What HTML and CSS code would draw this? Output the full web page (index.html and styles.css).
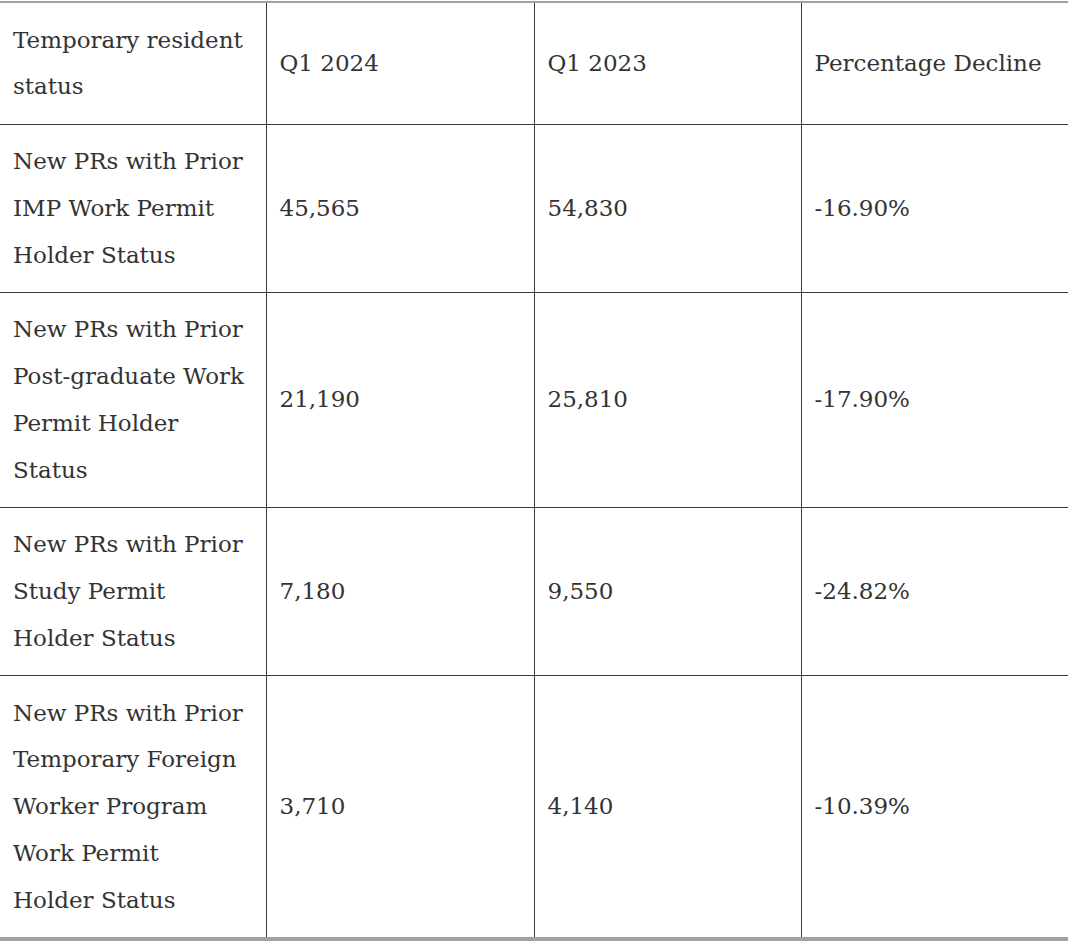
FILE: index.html
```html
<!DOCTYPE html>
<html lang="en">
<head>
<meta charset="utf-8">
<title>Temporary resident status</title>
<link rel="stylesheet" href="styles.css">
</head>
<body>
<table class="data">
  <colgroup>
    <col class="c1"><col class="c2"><col class="c3"><col class="c4">
  </colgroup>
  <tbody>
    <tr class="r-head">
      <td>Temporary resident<br>status</td>
      <td>Q1 2024</td>
      <td>Q1 2023</td>
      <td>Percentage Decline</td>
    </tr>
    <tr class="r1">
      <td>New PRs with Prior<br>IMP Work Permit<br>Holder Status</td>
      <td>45,565</td>
      <td>54,830</td>
      <td>-16.90%</td>
    </tr>
    <tr class="r2">
      <td>New PRs with Prior<br>Post-graduate Work<br>Permit Holder<br>Status</td>
      <td>21,190</td>
      <td>25,810</td>
      <td>-17.90%</td>
    </tr>
    <tr class="r3">
      <td>New PRs with Prior<br>Study Permit<br>Holder Status</td>
      <td>7,180</td>
      <td>9,550</td>
      <td>-24.82%</td>
    </tr>
    <tr class="r4">
      <td>New PRs with Prior<br>Temporary Foreign<br>Worker Program<br>Work Permit<br>Holder Status</td>
      <td>3,710</td>
      <td>4,140</td>
      <td>-10.39%</td>
    </tr>
  </tbody>
</table>
</body>
</html>
```

FILE: styles.css
```css
html, body {
  margin: 0;
  padding: 0;
  background: #ffffff;
}

body {
  padding-top: 1px;
  font-family: "DejaVu Serif", "Liberation Serif", serif;
  color: #333333;
}

.data {
  width: 1068px;
  border-collapse: collapse;
  table-layout: fixed;
  border-top: 2px solid #a2a2a2;
  border-bottom: 4px solid #a2a2a2;
}

.c1 { width: 266px; }
.c2 { width: 268px; }
.c3 { width: 267px; }
.c4 { width: 267px; }

.data td {
  font-size: 23px;
  line-height: 46.75px;
  padding: 13.5px 13px 13.5px 13px;
  vertical-align: middle;
  white-space: nowrap;
  border-left: 1px solid #3a3a3a;
  border-top: 1px solid #3a3a3a;
}

.data td:first-child {
  border-left: none;
}

.data tr:first-child td {
  border-top: none;
}
```
